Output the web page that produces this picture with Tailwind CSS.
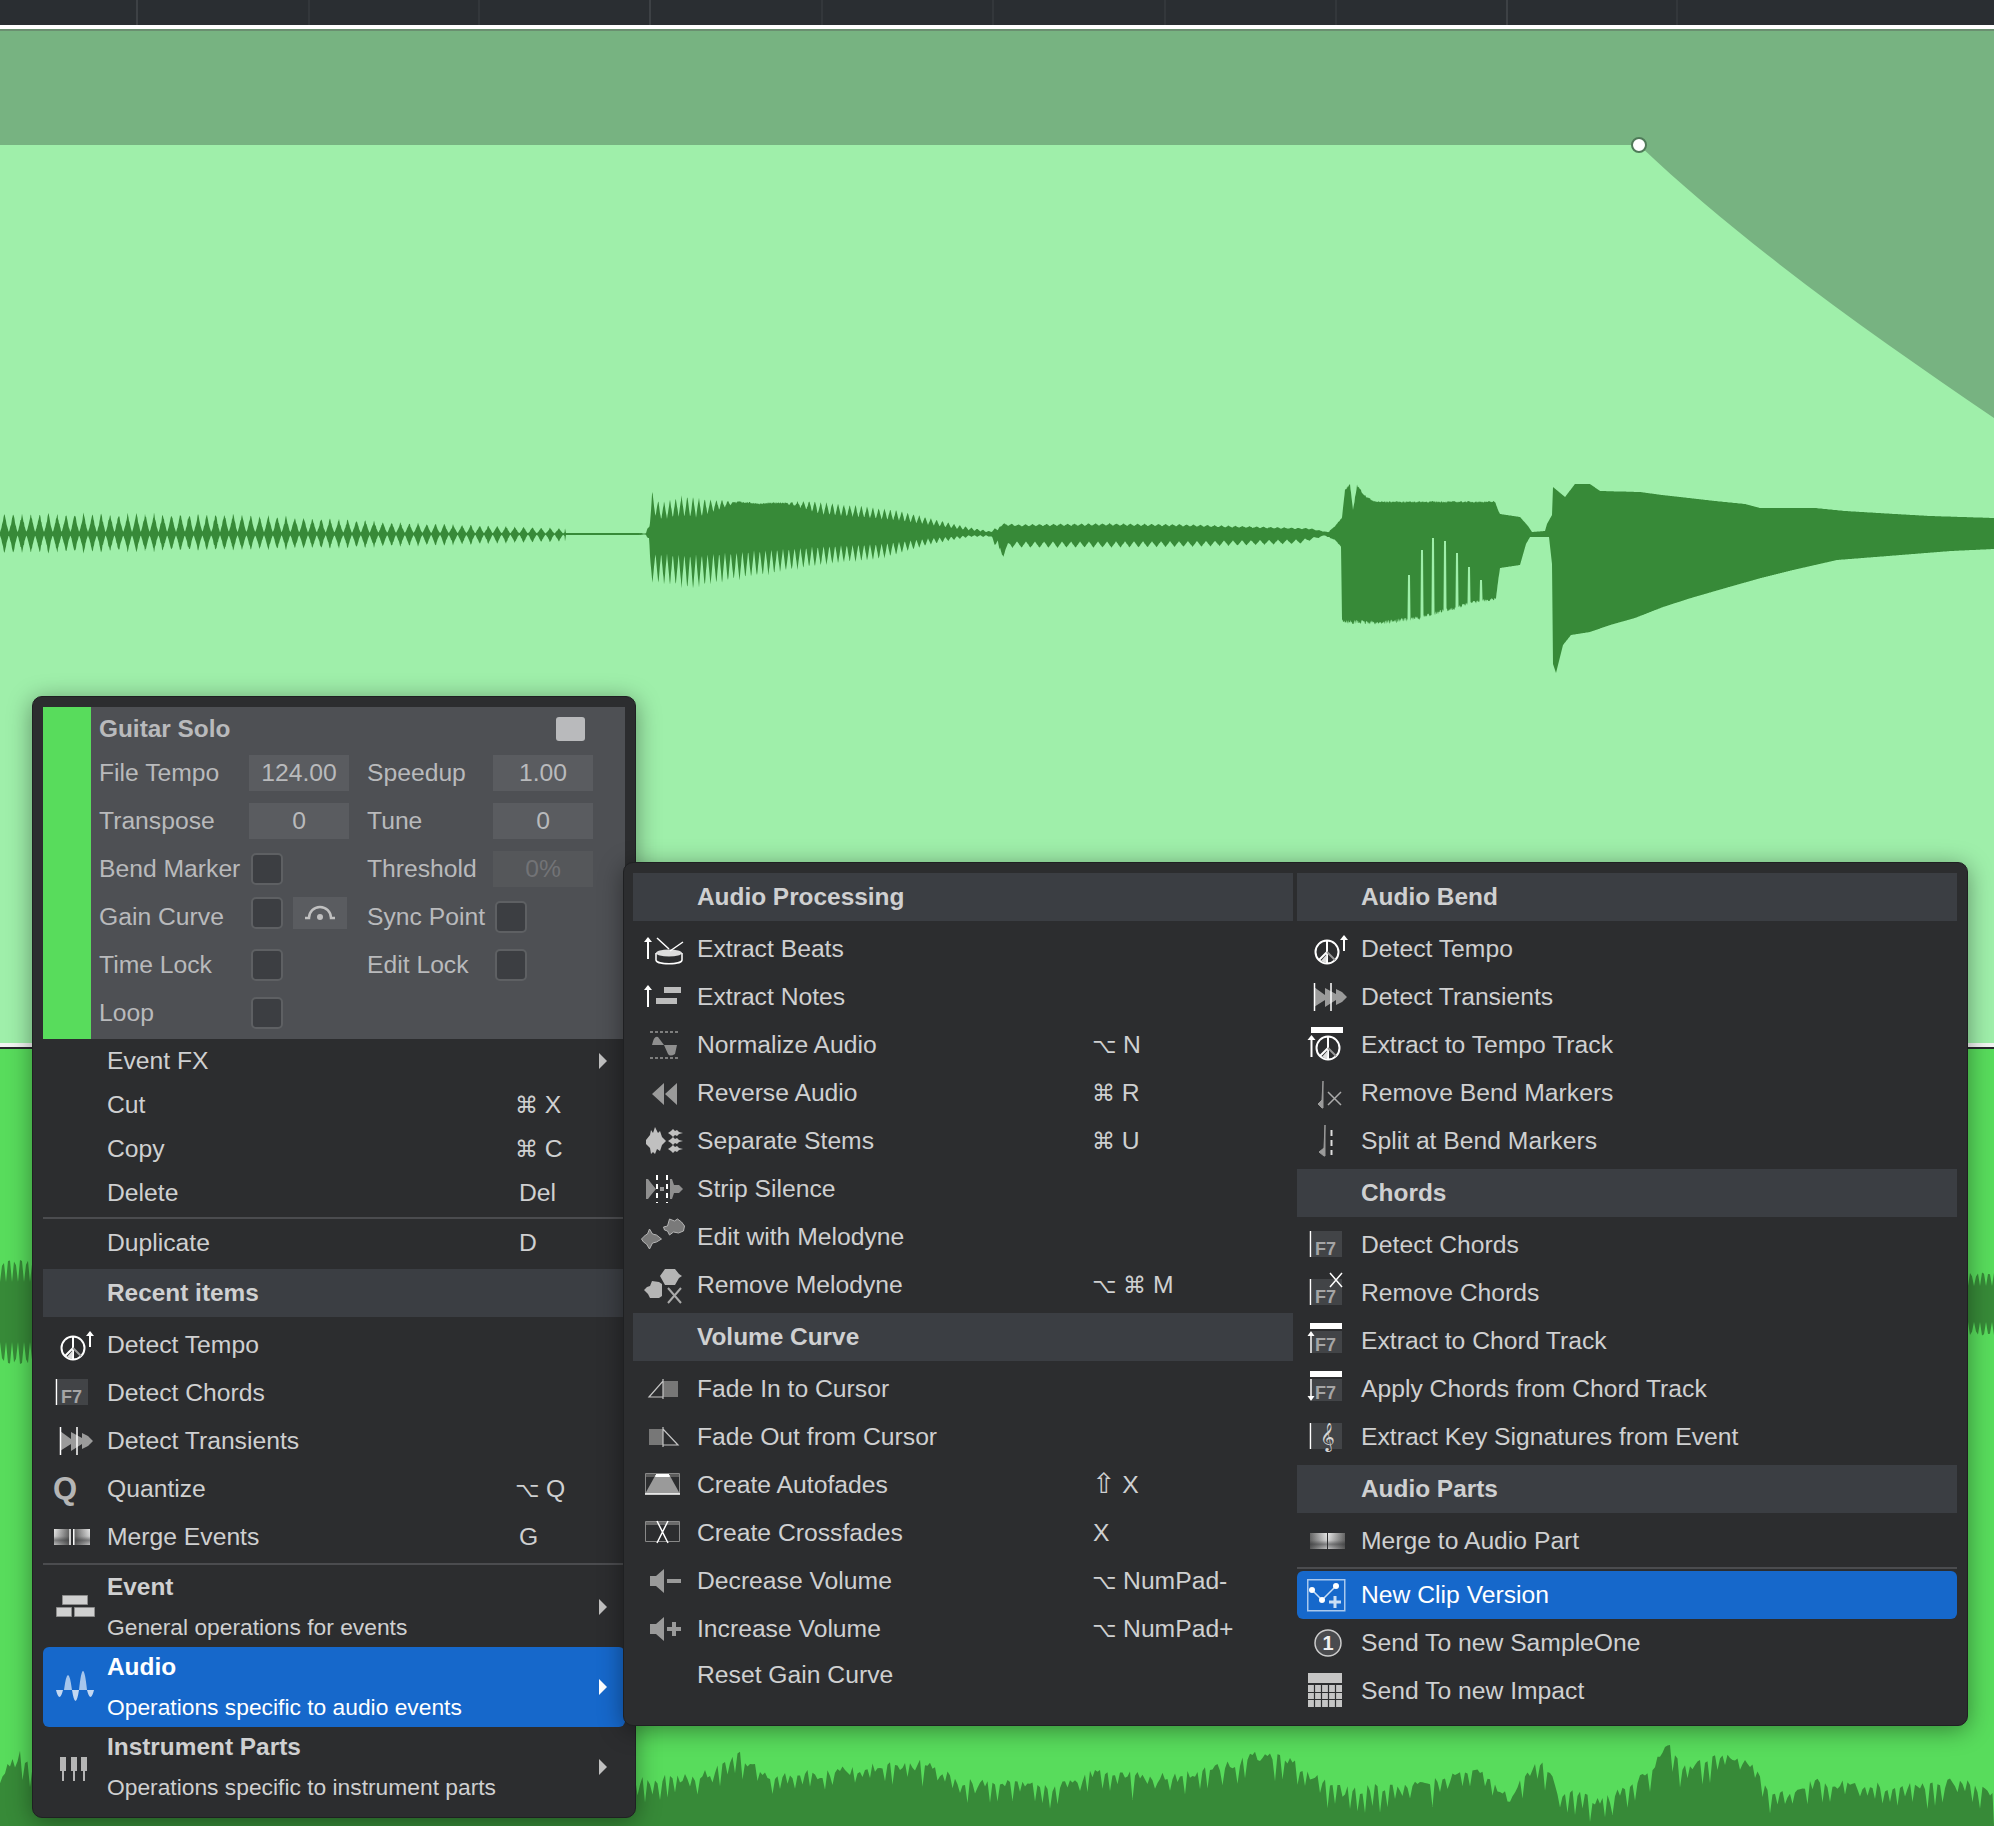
<!DOCTYPE html>
<html lang="en">
<head>
    <meta charset="UTF-8">
    <title>Audio event context menu</title>
    <script src="https://cdn.jsdelivr.net/npm/@tailwindcss/browser@4"></script>
</head>
<body class="bg-[#58dc5c] [font-family:'Liberation_Sans','DejaVu_Sans',sans-serif] text-[24.7px] text-[#cfd0d1]">

<!-- shared icons -->
<svg class="absolute w-0 h-0" aria-hidden="true">
    <defs>
        <linearGradient id="fadeRight"><stop offset="0" stop-color="#e6e6e6"/><stop offset="1" stop-color="#666"/></linearGradient>
        <linearGradient id="fadeLeft"><stop offset="0" stop-color="#666"/><stop offset="1" stop-color="#e6e6e6"/></linearGradient>
        <linearGradient id="shade" x2="0" y2="1"><stop offset="0" stop-color="#2c2d2f" stop-opacity="0"/><stop offset=".45" stop-color="#2c2d2f" stop-opacity=".1"/><stop offset=".7" stop-color="#2c2d2f" stop-opacity=".55"/><stop offset="1" stop-color="#2c2d2f" stop-opacity=".2"/></linearGradient>
    </defs>
    <symbol id="i-tempo" viewBox="0 0 44 44">
        <circle cx="22" cy="25" r="11.5" fill="none" stroke="#fff" stroke-width="2"/>
        <path d="M22 14v22M22 25l-8 8" stroke="#fff" stroke-width="2" fill="none"/><path d="M22 25l8 8" stroke="#999" stroke-width="2"/><path d="M22 27l-6 7 5 2z" fill="#ddd"/>
        <path d="M39 24V12" stroke="#fff" stroke-width="2"/><path d="M35 13l4-5 4 5z" fill="#fff"/>
    </symbol>
    <symbol id="i-f7" viewBox="0 0 44 44">
        <rect x="7" y="8" width="30" height="26" fill="#424447"/><path d="M5.500 8v26" stroke="#fff" stroke-width="1.5"/>
    </symbol>
    <symbol id="i-transients" viewBox="0 0 44 44">
        <path d="M9 12l11 8v5L9 32zM20 13l11 6v6l-11 7zM31 14l6 3 5 5-5 5-6 3z" fill="#9b9b9b"/>
        <path d="M9.500 8v28M26 8v28" stroke="#fff" stroke-width="1.5"/>
    </symbol>
    <symbol id="i-merge" viewBox="0 0 44 44">
        <rect x="3" y="14" width="15" height="16" fill="url(#fadeRight)"/><rect x="3" y="14" width="15" height="16" fill="url(#shade)"/>
        <rect x="23.500" y="14" width="15.500" height="16" fill="url(#fadeLeft)"/><rect x="23.500" y="14" width="15.500" height="16" fill="url(#shade)"/>
        <path d="M19 14v16M22.800 14v16" stroke="#fff" stroke-width="1.5"/>
    </symbol>
    <symbol id="i-merge-part" viewBox="0 0 44 44">
        <rect x="5" y="14" width="17" height="16" fill="url(#fadeLeft)"/><rect x="23" y="14" width="17" height="16" fill="url(#fadeRight)"/>
        <rect x="5" y="14" width="35" height="16" fill="url(#shade)"/>
    </symbol>
    <symbol id="i-event" viewBox="0 0 44 44"><path d="M11.500 10.500h25v9h-25zM5.500 22.500h15v9h-15zM23.500 22.500h20v9h-20z" fill="#d0d0d0" stroke="#8c8c8c"/></symbol>
    <symbol id="i-audio" viewBox="0 0 44 44">
        <path d="M5 25Q8.500 39 12 25zM21 25Q24.500 47 28 25zM36 25Q39.500 39 43 25z" fill="#c3d8f2"/>
        <path d="M13 25Q17-5 21 25zM28 25Q32-13 36 25z" fill="#a6c6ec"/>
    </symbol>
    <symbol id="i-parts" viewBox="0 0 44 44"><path d="M9 12h6v14h-2v10h-2V26H9zM20 12h6v14h-2v10h-2V26h-2zM30 12h6v14h-2v10h-2V26h-2z" fill="#b5b5b5"/></symbol>
    <symbol id="i-beats" viewBox="0 0 44 44">
        <path d="M7 32V13" stroke="#fff" stroke-width="2"/><path d="M3 15l4-5 4 5z" fill="#fff"/>
        <ellipse cx="28" cy="26" rx="13" ry="3.500" fill="#ddd"/><path d="M15 26v7c0 5 26 5 26 0v-7" fill="none" stroke="#fff" stroke-width="1.5"/>
        <path d="M16 11l12 11M42 15l-13 9" stroke="#fff" stroke-width="1.5"/>
    </symbol>
    <symbol id="i-notes" viewBox="0 0 44 44">
        <path d="M7 32V13" stroke="#fff" stroke-width="2"/><path d="M3 15l4-5 4 5z" fill="#fff"/>
        <path d="M23 12h17v6H23zM15 23h21v6H15z" fill="#bcbcbc"/>
    </symbol>
    <symbol id="i-normalize" viewBox="0 0 44 44">
        <path d="M9 9h28M9 35h28" stroke="#999" stroke-width="1.500" stroke-dasharray="3 2"/>
        <path d="M11 22Q13 12 17 14l6 8zM23 22h13l-2 9q-5 3-7 0z" fill="#8f8f8f"/>
    </symbol>
    <symbol id="i-reverse" viewBox="0 0 44 44"><path d="M11 23l12-11v22zM24 23l12-11v22z" fill="#9a9a9a"/></symbol>
    <symbol id="i-stems" viewBox="0 0 44 44">
        <path d="M5 21l4-5 1-5 2 3 2-6 3 6 2-2 2 6 4 4-4 4-2 6-3-2-2 5-2-2-2 2-1-6-4-4z" fill="#c0c0c0"/>
        <path d="M27 14l3-2 2-2 2 2 2-1 2 2 4 1-4 1-2 2-2-1-2 2-2-2zM27 22l3-2 2-2 2 2 2-1 2 2 4 1-4 1-2 2-2-1-2 2-2-2zM27 30l3-2 2-2 2 2 2-1 2 2 4 1-4 1-2 2-2-1-2 2-2-2z" fill="#c0c0c0"/>
    </symbol>
    <symbol id="i-strip" viewBox="0 0 44 44">
        <path d="M5 12h2l3 4 5 6-5 6-3 4H5z" fill="#8f8f8f"/><path d="M19 20h4v4h-4z" fill="#9a9a9a"/>
        <path d="M29 12h2l2 6 5 0 4 4-4 4-5 0-2 6h-2z" fill="#8f8f8f"/>
        <path d="M16 8v28M26 8v28" stroke="#fff" stroke-width="2" stroke-dasharray="5 4"/>
    </symbol>
    <symbol id="i-melodyne" viewBox="0 0 44 44">
        <path d="M0.500 24l4-4 2-1 2-5 3 5 4 1 5 4-5 3-4 1-3 6-3-5-3-2z" fill="#7a7a7a" stroke="#b5b5b5"/>
        <path d="M22.500 12l4-1 2-7 5 2 3-2 4 3 3 4-1 5-5 2-5-1-4 3-2-4-3-1z" fill="#7a7a7a" stroke="#b5b5b5"/>
    </symbol>
    <symbol id="i-melodyne-off" viewBox="0 0 44 44">
        <path d="M19 13l5-7h10l4 5 3 2-3 2-4 7H24zM3 27l3-3 3-1 2-5 7 1 3 2v12l-3 2H9l-2-4z" fill="#b5b5b5"/>
        <path d="M27 25l13 15M40 25L27 40" stroke="#aaa" stroke-width="2"/>
    </symbol>
    <symbol id="i-fadein" viewBox="0 0 44 44"><path d="M22 14h15v16H22z" fill="#777"/><path d="M8 30L22 14v16zM22 12v20" fill="none" stroke="#c5c5c5" stroke-width="1.2"/></symbol>
    <symbol id="i-fadeout" viewBox="0 0 44 44"><path d="M8 14h14v16H8z" fill="#777"/><path d="M37 30L22 14v16zM22 12v20" fill="none" stroke="#c5c5c5" stroke-width="1.2"/></symbol>
    <symbol id="i-autofade" viewBox="0 0 44 44">
        <path d="M4.500 10.500h34v20h-34z" fill="none" stroke="#888"/><path d="M5 11h33v3H5z" fill="#5c5c5c"/>
        <path d="M4 31l10-18h15l10 18z" fill="#9a9a9a"/><path d="M14 13h15M4 31h35" stroke="#fff" stroke-width="1.5"/><path d="M15 11h13v3H15z" fill="#fff"/>
    </symbol>
    <symbol id="i-crossfade" viewBox="0 0 44 44">
        <path d="M4.500 10.500h34v20h-34z" fill="none" stroke="#888"/><path d="M5 11h33v3H5z" fill="#6a6a6a"/>
        <path d="M16 10l11 22M27 10L16 32" stroke="#fff" stroke-width="1.5"/>
    </symbol>
    <symbol id="i-volume-down" viewBox="0 0 44 44"><path d="M9 17h6l8-7v24l-8-7H9zM26 20h14v4H26z" fill="#9a9a9a"/></symbol>
    <symbol id="i-volume-up" viewBox="0 0 44 44"><path d="M9 17h6l8-7v24l-8-7H9zM26 20h5v-5h4v5h5v4h-5v5h-4v-5h-5z" fill="#9a9a9a"/></symbol>
    <symbol id="i-tempo-track" viewBox="0 0 44 44">
        <path d="M6 4h32v6H6z" fill="#fff"/>
        <circle cx="23" cy="25" r="11.500" fill="none" stroke="#fff" stroke-width="2"/>
        <path d="M23 14v22M23 25l-8 8" stroke="#fff" stroke-width="2" fill="none"/><path d="M23 25l8 8" stroke="#999" stroke-width="2"/><path d="M23 27l-6 7 5 2z" fill="#ddd"/>
        <path d="M6.500 34V15" stroke="#fff" stroke-width="2"/><path d="M2.500 17l4-5 4 5z" fill="#fff"/>
    </symbol>
    <symbol id="i-bend-off" viewBox="0 0 44 44"><path d="M18 10v27h-1l-4-4 4-4z" fill="#9a9a9a" stroke="#9a9a9a"/><path d="M23 21l13 13M36 21L23 34" stroke="#aaa" stroke-width="1.500"/></symbol>
    <symbol id="i-bend-split" viewBox="0 0 44 44"><path d="M20 6v31h-1l-5-4 5-4z" fill="#9a9a9a" stroke="#9a9a9a"/><path d="M26.500 11v25" stroke="#ddd" stroke-width="2" stroke-dasharray="6 4"/></symbol>
    <symbol id="i-f7-off" viewBox="0 0 44 44">
        <rect x="7" y="8" width="30" height="26" fill="#424447"/><path d="M5.500 8v26" stroke="#fff" stroke-width="1.5"/>
        <path d="M25 2l12 14M37 2L25 16" stroke="#fff" stroke-width="1.5"/>
    </symbol>
    <symbol id="i-f7-up" viewBox="0 0 44 44">
        <path d="M5 4h32v6H5z" fill="#fff"/><rect x="7" y="12" width="30" height="22" fill="#424447"/>
        <path d="M6 34V15" stroke="#fff" stroke-width="1.5"/><path d="M2.500 17L6 12l3.500 5z" fill="#fff"/>
    </symbol>
    <symbol id="i-f7-down" viewBox="0 0 44 44">
        <path d="M5 4h32v6H5z" fill="#fff"/><rect x="7" y="12" width="30" height="22" fill="#424447"/>
        <path d="M6 12v19" stroke="#fff" stroke-width="1.5"/><path d="M2.500 29L6 34l3.500-5z" fill="#fff"/>
    </symbol>
    <symbol id="i-clip" viewBox="0 0 44 44">
        <path d="M2.750 6.750h37v31h-37z" fill="none" stroke="#a8c8ee" stroke-width="1.5"/>
        <path d="M7 17l10 10 14-14" fill="none" stroke="#c9def5" stroke-width="1.5"/><circle cx="7" cy="17" r="3" fill="#fff"/><circle cx="17" cy="27" r="3" fill="#fff"/><circle cx="31" cy="13" r="3" fill="#fff"/>
        <path d="M30 23v12M24 29h12" stroke="#c9def5" stroke-width="3"/>
    </symbol>
    <symbol id="i-sample" viewBox="0 0 44 44"><circle cx="23" cy="22" r="13" fill="#4a4b4e" stroke="#ccc" stroke-width="1.5"/></symbol>
    <symbol id="i-impact" viewBox="0 0 44 44">
        <path d="M3 4h34v10H3zM3 16h34v22H3z" fill="#c5c5c5"/>
        <path d="M9.500 16v22M16.500 16v22M23.500 16v22M30.500 16v22M3 23.500h34M3 30.500h34" stroke="#2c2d2f" stroke-width="1.200"/>
    </symbol>
    <symbol id="i-arrow" viewBox="0 0 8 16"><path d="M0 0l8 8-8 8z" fill="currentColor"/></symbol>
</svg>

<div class="relative w-[1994px] h-[1826px] overflow-hidden">

    <!-- ruler -->
    <div class="flex h-[25px] bg-[#2a2e32] pl-[136px]">
        <div class="w-[172px] border-l-2 border-[#3d4145]"></div>
        <div class="w-[170px] border-l-2 border-[#33373b]"></div>
        <div class="w-[171px] border-l-2 border-[#33373b]"></div>
        <div class="w-[172px] border-l-2 border-[#3d4145]"></div>
        <div class="w-[171px] border-l-2 border-[#33373b]"></div>
        <div class="w-[172px] border-l-2 border-[#33373b]"></div>
        <div class="w-[171px] border-l-2 border-[#33373b]"></div>
        <div class="w-[171px] border-l-2 border-[#33373b]"></div>
        <div class="w-[170px] border-l-2 border-[#3d4145]"></div>
        <div class="w-[172px] border-l-2 border-[#33373b]"></div>
    </div>
    <div class="h-[4px] bg-white"></div>
    <div class="h-[2px] bg-[#6a8f70]"></div>

    <!-- selected event -->
    <svg class="block w-[1994px] h-[1012px] bg-[#9fefaa]" viewBox="0 31 1994 1012">
        <path d="M0 31H1994V418C1880 340 1750 250 1639 145H0Z" fill="#77b381"/>
        <path id="wave-top" fill="#378a38"/>
        <circle cx="1639" cy="145" r="7" fill="#fff" stroke="#4f7a58" stroke-width="2"/>
    </svg>
    <div class="h-[4px] bg-[#f2f5f2]"></div>
    <div class="h-[2px] bg-[#26292c]"></div>

    <!-- event below -->
    <svg class="block w-[1994px] h-[777px]" viewBox="0 1049 1994 777">
        <path id="wave-mid" fill="#378a38"/>
        <path id="wave-low" fill="#378a38"/>
    </svg>

    <!-- context menu -->
    <div class="absolute left-[32px] top-[696px] w-[604px] h-[1122px] p-[10px] rounded-[10px] bg-[#2c2d2f] border border-[#1f2022] shadow-[0_4px_24px_rgba(0,0,0,0.4)]">
        <div class="flex h-[332px] w-[582px] bg-[#4e5054] text-[#b9babc]">
            <div class="w-[48px] bg-[#58dc5c]"></div>
            <div class="pl-2 flex-1">
                <div class="flex items-center h-[42px] pt-[2px] font-bold text-[24.4px]">
                    <span class="w-[457px]">Guitar Solo</span>
                    <div class="w-[29px] h-[24px] rounded-[3px] bg-[#b9babc]"></div>
                </div>
                <div class="flex items-center h-12">
                    <span class="w-[150px]">File Tempo</span>
                    <div class="w-[100px] h-9 bg-[#5a5c60] flex items-center justify-center">124.00</div>
                    <span class="w-[126px] ml-[18px]">Speedup</span>
                    <div class="w-[100px] h-9 bg-[#5a5c60] flex items-center justify-center">1.00</div>
                </div>
                <div class="flex items-center h-12">
                    <span class="w-[150px]">Transpose</span>
                    <div class="w-[100px] h-9 bg-[#5a5c60] flex items-center justify-center">0</div>
                    <span class="w-[126px] ml-[18px]">Tune</span>
                    <div class="w-[100px] h-9 bg-[#5a5c60] flex items-center justify-center">0</div>
                </div>
                <div class="flex items-center h-12">
                    <span class="w-[150px]">Bend Marker</span>
                    <div class="w-[100px]"><div class="ml-[2px] w-8 h-8 rounded-[5px] bg-[#3c3e42] border-2 border-[#5e6063]"></div></div>
                    <span class="w-[126px] ml-[18px]">Threshold</span>
                    <div class="w-[100px] h-9 bg-[#55575a] text-[#727376] flex items-center justify-center">0%</div>
                </div>
                <div class="flex items-center h-12">
                    <span class="w-[150px]">Gain Curve</span>
                    <div class="w-[100px] flex -mt-2">
                        <div class="ml-[2px] w-8 h-8 rounded-[5px] bg-[#3c3e42] border-2 border-[#5e6063]"></div>
                        <svg class="ml-[10px] w-[54px] h-8 bg-[#5a5c60]" viewBox="0 0 54 32"><path d="M12 21h4a11 11 0 0 1 22 0h4" fill="none" stroke="#c0c0c0" stroke-width="2.500"/><circle cx="27" cy="20" r="3" fill="#c0c0c0"/></svg>
                    </div>
                    <span class="w-[126px] ml-[18px]">Sync Point</span>
                    <div class="ml-[2px] w-8 h-8 rounded-[5px] bg-[#3c3e42] border-2 border-[#5e6063]"></div>
                </div>
                <div class="flex items-center h-12">
                    <span class="w-[150px]">Time Lock</span>
                    <div class="w-[100px]"><div class="ml-[2px] w-8 h-8 rounded-[5px] bg-[#3c3e42] border-2 border-[#5e6063]"></div></div>
                    <span class="w-[126px] ml-[18px]">Edit Lock</span>
                    <div class="ml-[2px] w-8 h-8 rounded-[5px] bg-[#3c3e42] border-2 border-[#5e6063]"></div>
                </div>
                <div class="flex items-center h-12">
                    <span class="w-[150px]">Loop</span>
                    <div class="ml-[2px] w-8 h-8 rounded-[5px] bg-[#3c3e42] border-2 border-[#5e6063]"></div>
                </div>
            </div>
        </div>

        <div class="flex items-center h-[44px] pl-[64px] pr-[18px]"><span>Event FX</span><svg class="ml-auto w-2 h-4 text-[#c0c0c0]"><use href="#i-arrow"/></svg></div>
        <div class="flex items-center h-[44px] pl-[64px]"><span class="w-[408px]">Cut</span><span><span class="text-[23px]">⌘</span> X</span></div>
        <div class="flex items-center h-[44px] pl-[64px]"><span class="w-[408px]">Copy</span><span><span class="text-[23px]">⌘</span> C</span></div>
        <div class="flex items-center h-[44px] pl-[64px]"><span class="w-[412px]">Delete</span><span>Del</span></div>
        <div class="h-[2px] mt-[2px] bg-[#4b4c4f]"></div>
        <div class="flex items-center h-12 pl-[64px]"><span class="w-[412px]">Duplicate</span><span>D</span></div>
        <div class="flex items-center h-12 mt-[2px] pl-[64px] bg-[#3b3e43] font-bold text-[24.4px]">Recent items</div>
        <div class="flex items-center h-12 mt-1"><svg class="ml-2 mr-3 w-11 h-11 shrink-0"><use href="#i-tempo"/></svg><span>Detect Tempo</span></div>
        <div class="flex items-center h-12"><svg class="ml-2 mr-3 w-11 h-11 shrink-0"><use href="#i-f7"/><text x="10" y="32" font-size="18" font-weight="700" fill="#a5a5a5">F7</text></svg><span>Detect Chords</span></div>
        <div class="flex items-center h-12"><svg class="ml-2 mr-3 w-11 h-11 shrink-0"><use href="#i-transients"/></svg><span>Detect Transients</span></div>
        <div class="flex items-center h-12"><svg class="ml-2 mr-3 w-11 h-11 shrink-0"><text x="14" y="32" text-anchor="middle" font-size="31" font-weight="700" fill="#b5b5b5">Q</text></svg><span class="w-[408px]">Quantize</span><span><span class="text-[21px]">⌥</span> Q</span></div>
        <div class="flex items-center h-12"><svg class="ml-2 mr-3 w-11 h-11 shrink-0"><use href="#i-merge"/></svg><span class="w-[412px]">Merge Events</span><span>G</span></div>
        <div class="h-[2px] mt-[2px] bg-[#4b4c4f]"></div>
        <div class="flex items-center h-20 mt-[2px] pr-[18px]"><svg class="ml-2 mr-3 w-11 h-11 shrink-0"><use href="#i-event"/></svg><div><div class="font-bold text-[24.4px] leading-[40px]">Event</div><div class="text-[22.8px] leading-[40px]">General operations for events</div></div><svg class="ml-auto w-2 h-4 text-[#c0c0c0]"><use href="#i-arrow"/></svg></div>
        <div class="flex items-center h-20 pr-[18px] rounded-md bg-[#1668cb] text-white"><svg class="ml-2 mr-3 w-11 h-11 shrink-0"><use href="#i-audio"/></svg><div><div class="font-bold text-[24.4px] leading-[40px]">Audio</div><div class="text-[22.8px] leading-[40px]">Operations specific to audio events</div></div><svg class="ml-auto w-2 h-4 text-white"><use href="#i-arrow"/></svg></div>
        <div class="flex items-center h-20 pr-[18px]"><svg class="ml-2 mr-3 w-11 h-11 shrink-0"><use href="#i-parts"/></svg><div><div class="font-bold text-[24.4px] leading-[40px]">Instrument Parts</div><div class="text-[22.8px] leading-[40px]">Operations specific to instrument parts</div></div><svg class="ml-auto w-2 h-4 text-[#c0c0c0]"><use href="#i-arrow"/></svg></div>
    </div>

    <!-- Audio submenu -->
    <div class="absolute left-[623px] top-[862px] w-[1345px] h-[864px] pl-[9px] pr-[10px] pt-[10px] flex gap-[4px] rounded-[10px] bg-[#2c2d2f] border border-[#1f2022] shadow-[0_4px_24px_rgba(0,0,0,0.4)]">
        <div class="w-[660px]">
            <div class="flex items-center h-12 pl-[64px] bg-[#3b3e43] font-bold text-[24.4px]">Audio Processing</div>
            <div class="flex items-center h-12 mt-1"><svg class="ml-2 mr-3 w-11 h-11 shrink-0"><use href="#i-beats"/></svg><span>Extract Beats</span></div>
            <div class="flex items-center h-12"><svg class="ml-2 mr-3 w-11 h-11 shrink-0"><use href="#i-notes"/></svg><span>Extract Notes</span></div>
            <div class="flex items-center h-12"><svg class="ml-2 mr-3 w-11 h-11 shrink-0"><use href="#i-normalize"/></svg><span class="w-[395px]">Normalize Audio</span><span><span class="text-[21px]">⌥</span> N</span></div>
            <div class="flex items-center h-12"><svg class="ml-2 mr-3 w-11 h-11 shrink-0"><use href="#i-reverse"/></svg><span class="w-[395px]">Reverse Audio</span><span><span class="text-[23px]">⌘</span> R</span></div>
            <div class="flex items-center h-12"><svg class="ml-2 mr-3 w-11 h-11 shrink-0"><use href="#i-stems"/></svg><span class="w-[395px]">Separate Stems</span><span><span class="text-[23px]">⌘</span> U</span></div>
            <div class="flex items-center h-12"><svg class="ml-2 mr-3 w-11 h-11 shrink-0"><use href="#i-strip"/></svg><span>Strip Silence</span></div>
            <div class="flex items-center h-12"><svg class="ml-2 mr-3 w-11 h-11 shrink-0"><use href="#i-melodyne"/></svg><span>Edit with Melodyne</span></div>
            <div class="flex items-center h-12"><svg class="ml-2 mr-3 w-11 h-11 shrink-0"><use href="#i-melodyne-off"/></svg><span class="w-[395px]">Remove Melodyne</span><span><span class="text-[21px]">⌥</span> <span class="text-[23px]">⌘</span> M</span></div>
            <div class="flex items-center h-12 mt-1 pl-[64px] bg-[#3b3e43] font-bold text-[24.4px]">Volume Curve</div>
            <div class="flex items-center h-12 mt-1"><svg class="ml-2 mr-3 w-11 h-11 shrink-0"><use href="#i-fadein"/></svg><span>Fade In to Cursor</span></div>
            <div class="flex items-center h-12"><svg class="ml-2 mr-3 w-11 h-11 shrink-0"><use href="#i-fadeout"/></svg><span>Fade Out from Cursor</span></div>
            <div class="flex items-center h-12"><svg class="ml-2 mr-3 w-11 h-11 shrink-0"><use href="#i-autofade"/></svg><span class="w-[395px]">Create Autofades</span><span><span class="text-[28px] leading-none">⇧</span> X</span></div>
            <div class="flex items-center h-12"><svg class="ml-2 mr-3 w-11 h-11 shrink-0"><use href="#i-crossfade"/></svg><span class="w-[396px]">Create Crossfades</span><span>X</span></div>
            <div class="flex items-center h-12"><svg class="ml-2 mr-3 w-11 h-11 shrink-0"><use href="#i-volume-down"/></svg><span class="w-[395px]">Decrease Volume</span><span><span class="text-[21px]">⌥</span> NumPad-</span></div>
            <div class="flex items-center h-12"><svg class="ml-2 mr-3 w-11 h-11 shrink-0"><use href="#i-volume-up"/></svg><span class="w-[395px]">Increase Volume</span><span><span class="text-[21px]">⌥</span> NumPad+</span></div>
            <div class="flex items-center h-[44px] pl-[64px]">Reset Gain Curve</div>
        </div>
        <div class="w-[660px]">
            <div class="flex items-center h-12 pl-[64px] bg-[#3b3e43] font-bold text-[24.4px]">Audio Bend</div>
            <div class="flex items-center h-12 mt-1"><svg class="ml-2 mr-3 w-11 h-11 shrink-0"><use href="#i-tempo"/></svg><span>Detect Tempo</span></div>
            <div class="flex items-center h-12"><svg class="ml-2 mr-3 w-11 h-11 shrink-0"><use href="#i-transients"/></svg><span>Detect Transients</span></div>
            <div class="flex items-center h-12"><svg class="ml-2 mr-3 w-11 h-11 shrink-0"><use href="#i-tempo-track"/></svg><span>Extract to Tempo Track</span></div>
            <div class="flex items-center h-12"><svg class="ml-2 mr-3 w-11 h-11 shrink-0"><use href="#i-bend-off"/></svg><span>Remove Bend Markers</span></div>
            <div class="flex items-center h-12"><svg class="ml-2 mr-3 w-11 h-11 shrink-0"><use href="#i-bend-split"/></svg><span>Split at Bend Markers</span></div>
            <div class="flex items-center h-12 mt-1 pl-[64px] bg-[#3b3e43] font-bold text-[24.4px]">Chords</div>
            <div class="flex items-center h-12 mt-1"><svg class="ml-2 mr-3 w-11 h-11 shrink-0"><use href="#i-f7"/><text x="10" y="32" font-size="18" font-weight="700" fill="#a5a5a5">F7</text></svg><span>Detect Chords</span></div>
            <div class="flex items-center h-12"><svg class="ml-2 mr-3 w-11 h-11 shrink-0"><use href="#i-f7-off"/><text x="10" y="32" font-size="18" font-weight="700" fill="#a5a5a5">F7</text></svg><span>Remove Chords</span></div>
            <div class="flex items-center h-12"><svg class="ml-2 mr-3 w-11 h-11 shrink-0"><use href="#i-f7-up"/><text x="10" y="32" font-size="18" font-weight="700" fill="#a5a5a5">F7</text></svg><span>Extract to Chord Track</span></div>
            <div class="flex items-center h-12"><svg class="ml-2 mr-3 w-11 h-11 shrink-0"><use href="#i-f7-down"/><text x="10" y="32" font-size="18" font-weight="700" fill="#a5a5a5">F7</text></svg><span>Apply Chords from Chord Track</span></div>
            <div class="flex items-center h-12"><svg class="ml-2 mr-3 w-11 h-11 shrink-0"><use href="#i-f7"/><text x="22" y="30" text-anchor="middle" font-size="25" fill="#d5d5d5" font-family="DejaVu Sans">&#x1D11E;</text></svg><span>Extract Key Signatures from Event</span></div>
            <div class="flex items-center h-12 mt-1 pl-[64px] bg-[#3b3e43] font-bold text-[24.4px]">Audio Parts</div>
            <div class="flex items-center h-12 mt-1"><svg class="ml-2 mr-3 w-11 h-11 shrink-0"><use href="#i-merge-part"/></svg><span>Merge to Audio Part</span></div>
            <div class="h-[2px] mt-[2px] bg-[#4b4c4f]"></div>
            <div class="flex items-center h-12 mt-[2px] rounded-md bg-[#1668cb] text-white"><svg class="ml-2 mr-3 w-11 h-11 shrink-0"><use href="#i-clip"/></svg><span>New Clip Version</span></div>
            <div class="flex items-center h-12"><svg class="ml-2 mr-3 w-11 h-11 shrink-0"><use href="#i-sample"/><text x="23" y="29" text-anchor="middle" font-size="20" font-weight="700" fill="#f0f0f0">1</text></svg><span>Send To new SampleOne</span></div>
            <div class="flex items-center h-12"><svg class="ml-2 mr-3 w-11 h-11 shrink-0"><use href="#i-impact"/></svg><span>Send To new Impact</span></div>
        </div>
    </div>
</div>

<script>
    // waveforms: envelopes read off the picture, comb + jitter on top
    var seed = 7;
    function rnd() {
        seed = (seed * 16807) % 2147483647;
        return seed / 2147483647;
    }
    function lerp(pts, x) {
        for (var i = 1; i < pts.length; i++) {
            if (x <= pts[i][0]) {
                var a = pts[i - 1], b = pts[i];
                return a[1] + (b[1] - a[1]) * (x - a[0]) / (b[0] - a[0] || 1);
            }
        }
        return pts[pts.length - 1][1];
    }
    function tri(x, p) {
        var t = (x / p) % 1;
        return t < 0.5 ? t * 2 : 2 - t * 2;
    }

    var up = [[0,22],[230,22],[414,12],[565,6],[566,1],[646,1],[649,12],[652,44],[660,32],[680,39],[760,31],[810,34],[860,29],[900,24],[960,9],[990,3],[1003,11],[1020,10],[1100,11],[1180,10],[1250,8],[1310,6],[1328,2],[1335,8],[1342,17],[1345,45],[1350,51],[1353,24],[1357,50],[1365,39],[1375,33],[1495,33],[1500,20],[1520,17],[1528,8],[1532,2],[1545,3],[1547,10],[1552,19],[1553,47],[1565,37],[1575,50],[1590,50],[1600,43],[1640,42],[1662,39],[1680,37],[1715,33],[1745,30],[1760,26],[1815,26],[1845,23],[1895,20],[1930,18],[1994,16]];
    var down = [[0,21],[230,18],[400,14],[565,8],[566,1],[646,1],[649,8],[650,50],[692,56],[800,36],[830,31],[880,26],[930,11],[970,3],[990,3],[1002,25],[1010,14],[1100,14],[1200,13],[1300,10],[1325,2],[1335,6],[1341,13],[1342,88],[1345,90],[1380,91],[1420,86],[1470,71],[1496,66],[1500,34],[1520,31],[1526,10],[1530,3],[1549,3],[1552,30],[1553,130],[1556,139],[1563,111],[1571,101],[1590,98],[1610,91],[1635,84],[1663,73],[1691,64],[1729,53],[1761,44],[1793,36],[1837,26],[1888,22],[1951,17],[1994,15]];
    var notches = [[1409,41],[1422,16],[1433,4],[1445,7],[1457,19],[1469,33],[1481,46]];
    var topFloor = [[640,0.45],[700,0.45],[740,1],[780,1],[820,0.6],[1000,0.5]];

    function combTop(x) {
        if (x < 565) return 0.1 + 0.9 * Math.pow(tri(x, 8.8), 1.2);
        if (x < 640) return 1;
        if (x < 1000) {
            var f = lerp(topFloor, x);
            return f + (1 - f) * tri(x, 5.8);
        }
        if (x < 1330) return 0.78 + 0.22 * tri(x, 7);
        return 1;
    }
    function combBottom(x) {
        if (x < 565) return 0.08 + 0.92 * Math.pow(tri(x, 8.8), 1.2);
        if (x < 640) return 1;
        if (x < 1000) return 0.38 + 0.62 * tri(x, 5.8);
        if (x < 1330) return 0.55 + 0.45 * tri(x, 9);
        return 1;
    }

    var top1 = "", bottom1 = [];
    for (var x = 0; x <= 1994; x += 0.5) {
        var j = x < 565 ? 0.82 + rnd() * 0.18 : (x < 1500 ? 0.95 + rnd() * 0.05 : 1);
        var t = 534 - lerp(up, x) * combTop(x) * j;
        var d = lerp(down, x) * combBottom(x) * j;
        notches.forEach(function (n) { if (Math.abs(x - n[0]) < 1.5) d = n[1]; });
        top1 += (x ? "L" : "M") + x + " " + t.toFixed(1);
        bottom1.unshift("L" + x + " " + (534 + d).toFixed(1));
    }
    document.getElementById("wave-top").setAttribute("d", top1 + bottom1.join("") + "Z");

    // track below: only the ends show past the menus
    var topMid = "", bottomMid = [];
    for (x = 0; x <= 1994; x += 2) {
        var a = x < 1000 ? 60 : 36;
        var c = x < 1000 ? 1312 : 1304;
        var m = 0.5 + 0.5 * Math.pow(tri(x, 6), 0.7) * (0.7 + rnd() * 0.3);
        topMid += (x ? "L" : "M") + x + " " + (c - a * m).toFixed(1);
        bottomMid.unshift("L" + x + " " + (c + a * m).toFixed(1));
    }
    document.getElementById("wave-mid").setAttribute("d", topMid + bottomMid.join("") + "Z");

    var peaks = [[0,1770],[20,1748],[32,1765],[636,1775],[700,1770],[738,1748],[770,1772],[860,1762],[925,1757],[960,1775],[1060,1780],[1100,1762],[1150,1772],[1200,1766],[1260,1748],[1290,1755],[1335,1783],[1371,1782],[1443,1775],[1472,1760],[1510,1790],[1539,1752],[1559,1785],[1604,1795],[1645,1770],[1671,1737],[1681,1762],[1694,1760],[1721,1747],[1748,1757],[1775,1790],[1820,1775],[1869,1780],[1919,1780],[1964,1775],[1994,1790]];
    var low = "M0 1826";
    for (x = 0; x <= 1994; x += 2.5) {
        var y = lerp(peaks, x) + 2 + (1 - tri(x, 7.5)) * 30 * rnd();
        low += "L" + x + " " + y.toFixed(1);
    }
    document.getElementById("wave-low").setAttribute("d", low + "L1994 1826Z");
</script>
</body>
</html>
